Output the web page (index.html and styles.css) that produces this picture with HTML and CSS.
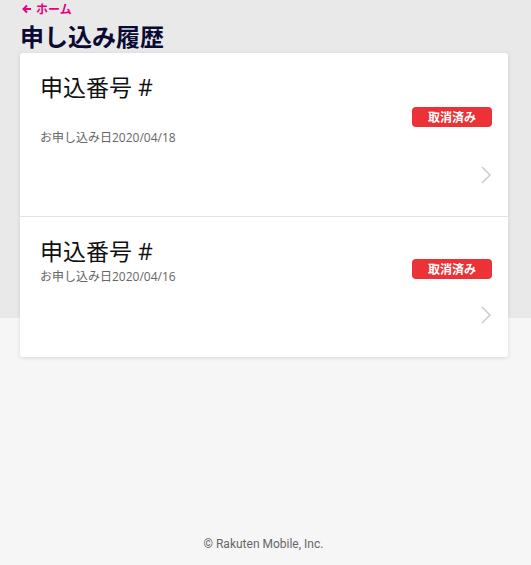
FILE: index.html
```html
<!DOCTYPE html>
<html lang="ja">
<head>
<meta charset="utf-8">
<link rel="stylesheet" href="styles.css">
</head>
<body>
<div class="page">
  <header class="head">
    <a class="back" href="#"><svg class="back-ico" width="10" height="10" viewBox="0 0 10 10"><path d="M9 5H2M5 1.5L1.5 5 5 8.5" fill="none" stroke="#e6007e" stroke-width="2"/></svg>ホーム</a>
    <h1 class="title">申し込み履歴</h1>
  </header>
  <section class="card">
    <div class="item item-first">
      <div class="left">
        <div class="num">申込番号 #</div>
        <div class="date">お申し込み日2020/04/18</div>
      </div>
      <div class="right">
        <span class="badge">取消済み</span>
        <svg class="chev" width="10" height="18" viewBox="0 0 10 18"><polyline points="1,1 9,9 1,17" fill="none" stroke="#c8c8d8" stroke-width="1.5"/></svg>
      </div>
    </div>
    <div class="item item-second">
      <div class="left">
        <div class="num">申込番号 #</div>
        <div class="date">お申し込み日2020/04/16</div>
      </div>
      <div class="right">
        <span class="badge">取消済み</span>
        <svg class="chev" width="10" height="18" viewBox="0 0 10 18"><polyline points="1,1 9,9 1,17" fill="none" stroke="#c8c8d8" stroke-width="1.5"/></svg>
      </div>
    </div>
  </section>
  <footer class="foot">© Rakuten Mobile, Inc.</footer>
</div>
</body>
</html>
```

FILE: styles.css
```css
html, body {
  margin: 0;
  padding: 0;
}
body {
  background: linear-gradient(#e9e9ea 0, #e9e9ea 318px, #f6f6f6 318px, #f6f6f6 100%);
  min-height: 565px;
  font-family: "Open Sans", "Noto Sans CJK JP", sans-serif;
  color: #222;
}
.page {
  display: flex;
  flex-direction: column;
  min-height: 565px;
}
.head {
  padding: 0 20px;
  display: flex;
  flex-direction: column;
  align-items: flex-start;
}
.back {
  display: flex;
  align-items: center;
  gap: 4px;
  color: #e6007e;
  font-family: "Noto Sans CJK JP", sans-serif;
  font-size: 12px;
  font-weight: 700;
  text-decoration: none;
  line-height: 17.5px;
  margin-left: 2px;
}
.title {
  margin: 0;
  font-family: "Noto Sans CJK JP", sans-serif;
  font-size: 24px;
  font-weight: 700;
  line-height: 35px;
  color: #0a0a32;
}
.card {
  margin: 0 23px 0 20px;
  background: #fff;
  border-radius: 3px;
  box-shadow: 0 1px 4px rgba(0,0,0,0.12);
}
.item {
  display: flex;
  justify-content: space-between;
  padding: 0 16px 0 20px;
}
.item-first {
  height: 163px;
  border-bottom: 1px solid #e3e3e3;
}
.item-second {
  height: 140px;
}
.left {
  display: flex;
  flex-direction: column;
}
.num {
  font-family: "Open Sans", "Noto Sans CJK JP", sans-serif;
  font-size: 23px;
  line-height: 30px;
  color: #111;
  padding-top: 19px;
}
.date {
  font-size: 12px;
  line-height: 18px;
  color: #666;
}
.item-first .date { margin-top: 27px; }
.item-second .date { margin-top: 2px; }
.right {
  display: flex;
  flex-direction: column;
  align-items: flex-end;
}
.badge {
  width: 80px;
  height: 20px;
  background: #ec3237;
  color: #fff;
  border-radius: 4px;
  font-family: "Noto Sans CJK JP", sans-serif;
  font-size: 12px;
  font-weight: 700;
  line-height: 20px;
  text-align: center;
}
.item-first .badge { margin-top: 54px; }
.item-first .chev { margin-top: 39px; margin-right: 1px; }
.item-second .badge { margin-top: 42px; }
.item-second .chev { margin-top: 27px; margin-right: 1px; }
.foot {
  margin-top: auto;
  text-align: center;
  font-family: Roboto, sans-serif;
  font-size: 12px;
  line-height: 16px;
  color: #666;
  padding-bottom: 13px;
  padding-right: 4px;
}
```
